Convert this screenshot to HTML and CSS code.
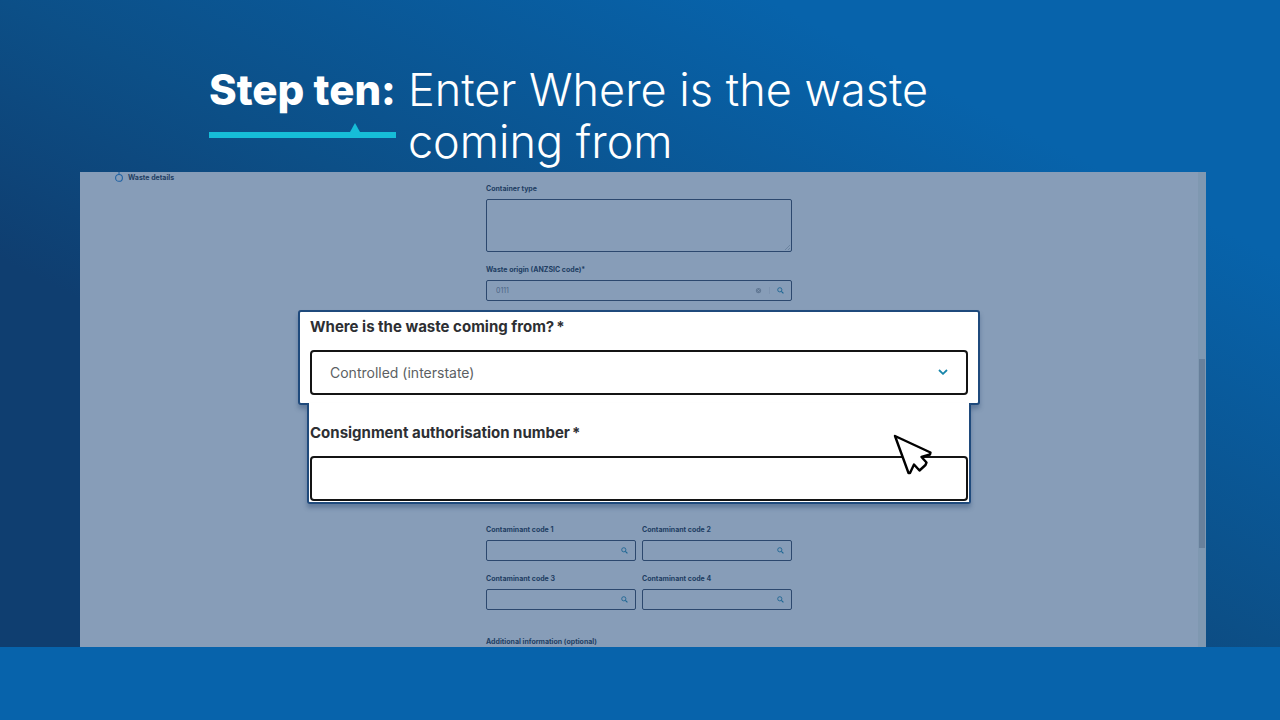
FILE: index.html
```
<!DOCTYPE html>
<html lang="en">
<head>
  <meta charset="UTF-8">
  <meta name="viewport" content="width=device-width, initial-scale=1.0">
  <title>Step ten</title>
  <link rel="stylesheet" href="styles.css">
</head>
<body>
  <svg class="sprite" aria-hidden="true">
    <symbol id="search" viewBox="0 0 8 8">
      <circle cx="3.2" cy="3.2" r="2.4" fill="none" stroke="currentColor"/>
      <path d="M5 5 L7.3 7.3" stroke="currentColor" stroke-width="1.3"/>
    </symbol>
  </svg>

  <main class="slide">
    <h1 class="heading">
      <span class="step">Step ten:</span>
      <span class="title">Enter Where is the waste coming from</span>
    </h1>

    <div class="panel">
      <div class="progress">
        <svg class="marker" viewBox="0 0 8 10">
          <path d="M4 0 V2.5" stroke="#1f62a3"/>
          <circle cx="4" cy="5.9" r="3.4" fill="none" stroke="#1f62a3" stroke-width="1.1"/>
        </svg>
        <span>Waste details</span>
      </div>

      <form class="form">
        <div class="field">
          <label for="container">Container type</label>
          <div class="area">
            <textarea id="container"></textarea>
            <svg class="grip" viewBox="0 0 5 5"><path d="M0 5 L5 0 M3 5 L5 3" stroke="#5b7391" stroke-width="0.6"/></svg>
          </div>
        </div>

        <div class="field">
          <label for="origin">Waste origin (ANZSIC code)*</label>
          <div class="box">
            <input id="origin" type="text" value="0111">
            <button type="button" class="clear" aria-label="Clear">
              <svg viewBox="0 0 8 8"><circle cx="4" cy="4" r="3" fill="#627995"/><path d="M2.7 2.7 L5.3 5.3 M5.3 2.7 L2.7 5.3" stroke="#8ba0b8" stroke-width="0.7"/></svg>
            </button>
            <button type="button" aria-label="Search"><svg><use href="#search"/></svg></button>
          </div>
        </div>

        <div class="codes">
          <div class="field">
            <label for="code1">Contaminant code 1</label>
            <div class="box">
              <input id="code1" type="text">
              <button type="button" aria-label="Search"><svg><use href="#search"/></svg></button>
            </div>
          </div>
          <div class="field">
            <label for="code2">Contaminant code 2</label>
            <div class="box">
              <input id="code2" type="text">
              <button type="button" aria-label="Search"><svg><use href="#search"/></svg></button>
            </div>
          </div>
          <div class="field">
            <label for="code3">Contaminant code 3</label>
            <div class="box">
              <input id="code3" type="text">
              <button type="button" aria-label="Search"><svg><use href="#search"/></svg></button>
            </div>
          </div>
          <div class="field">
            <label for="code4">Contaminant code 4</label>
            <div class="box">
              <input id="code4" type="text">
              <button type="button" aria-label="Search"><svg><use href="#search"/></svg></button>
            </div>
          </div>
        </div>

        <div class="more">Additional information (optional)</div>

        <!-- enlarged fields, lying over the form -->
        <div class="callout">
          <div class="card source">
            <label for="from">Where is the waste coming from?<span class="star">*</span></label>
            <div class="select">
              <select id="from">
                <option>Controlled (interstate)</option>
              </select>
              <svg class="chevron" viewBox="0 0 10 6"><path d="M1 1 L5 4.8 L9 1" fill="none" stroke="#1786ab" stroke-width="1.8"/></svg>
            </div>
          </div>
          <div class="card number">
            <label for="authorisation">Consignment authorisation number<span class="star">*</span></label>
            <input id="authorisation" type="text">
          </div>
          <svg class="cursor" viewBox="0 0 40 42">
            <path d="M2 2 L37.5 18.5 L37 20.5 L28.5 23 L33.5 28.5 L32.5 31 L26.5 36.5 L21 30.5 L17 39 L15.5 39 Z" fill="#fff" stroke="#000" stroke-width="2.4" stroke-linejoin="round"/>
          </svg>
        </div>
      </form>

      <div class="scrollbar"><div class="thumb"></div></div>
    </div>
  </main>
</body>
</html>
```
FILE: styles.css
```
* {
  box-sizing: border-box;
}

body {
  margin: 0;
  min-height: 100vh;
  background: #0763ab;
  font-family: Inter, "Liberation Sans", sans-serif;
}

.sprite {
  display: none;
}

.slide {
  padding: 64px 74px 0 80px;
  background: linear-gradient(to top right, #0f3e70 30%, #0c4f87 50%, #0763ab 80%);
}

.heading {
  display: flex;
  gap: 12px;
  margin: 0 0 4px;
  padding-left: 129px;
  color: #fff;
  font-size: 42px;
  line-height: 52px;
  font-weight: 300;
}

.step {
  position: relative;
  flex: none;
  height: 74px;
  border-bottom: 6px solid #16bdd8;
  font-weight: 800;
}

.step::after {
  content: "";
  position: absolute;
  right: 36px;
  bottom: 0;
  border: 5px solid transparent;
  border-top: 0;
  border-bottom: 9px solid #16bdd8;
}

.title {
  max-width: 560px;
  font-size: 45px;
}

.panel {
  display: grid;
  grid-template-columns: 1fr 306px 1fr 8px;
  background: #879db8;
  color: #213d63;
  font-size: 7px;
  line-height: 11px;
  font-weight: 700;
}

.progress {
  display: flex;
  gap: 5px;
  padding-left: 35px;
}

.marker {
  flex: none;
  width: 8px;
  height: 10px;
}

.form {
  position: relative;
  display: flex;
  flex-direction: column;
  gap: 12px;
  padding-top: 11px;
}

.field {
  display: flex;
  flex-direction: column;
  gap: 5px;
}

.area {
  position: relative;
  display: flex;
}

textarea {
  width: 100%;
  height: 53px;
  border: 1px solid #2c486e;
  border-radius: 2px;
  background: none;
  resize: none;
}

.grip {
  position: absolute;
  right: 2px;
  bottom: 2px;
  width: 5px;
  height: 5px;
}

.box {
  display: flex;
  align-items: center;
  height: 21px;
  padding-right: 7px;
  border: 1px solid #2c486e;
  border-radius: 2px;
}

.box input {
  flex: 1;
  min-width: 0;
  padding: 0 9px;
  border: 0;
  background: none;
  color: #4b6484;
  font: 400 7px/11px Inter, sans-serif;
}

.box button {
  display: flex;
  padding: 0;
  border: 0;
  background: none;
  color: #1b6592;
}

.box svg {
  width: 7px;
  height: 7px;
}

.box .clear {
  margin-right: 7px;
  padding-right: 7px;
  border-right: 1px solid #7e94b0;
}

.codes {
  display: grid;
  grid-template-columns: 1fr 1fr;
  gap: 12px 6px;
  margin-top: 211px;
}

.more {
  margin-top: 14px;
}

.callout {
  position: absolute;
  top: 138px;
  left: 50%;
  width: 682px;
  transform: translateX(-50%);
  color: #2d2f33;
  font-size: 15px;
  line-height: 16px;
  font-weight: 700;
}

.card {
  display: flex;
  flex-direction: column;
  gap: 15px;
  border: 2px solid #1f4a7c;
  border-radius: 3px;
  background: #fff;
  box-shadow: 0 4px 4px rgba(31, 64, 106, 0.35);
}

.source {
  padding: 7px 10px 8px;
}

.number {
  position: relative;
  margin: -2px 9px 0;
  padding: 22px 1px 1px;
  border-top: 0;
  border-radius: 0 0 3px 3px;
}

.star {
  margin-left: 2px;
}

.card select,
.card input {
  width: 100%;
  height: 45px;
  padding: 0 18px;
  border: 2px solid #141414;
  border-radius: 4px;
  background: #fff;
  color: #5c5f63;
  font: 400 14px/16px Inter, sans-serif;
  appearance: none;
}

.select {
  position: relative;
  display: flex;
}

.chevron {
  position: absolute;
  top: 19px;
  right: 20px;
  width: 10px;
  height: 6px;
}

.cursor {
  position: absolute;
  top: 124px;
  right: 47px;
  width: 40px;
  height: 42px;
}

.scrollbar {
  grid-column: 4;
  padding: 187px 1px 0;
  background: #7f98b1;
}

.thumb {
  height: 189px;
  background: #68809b;
}
```
